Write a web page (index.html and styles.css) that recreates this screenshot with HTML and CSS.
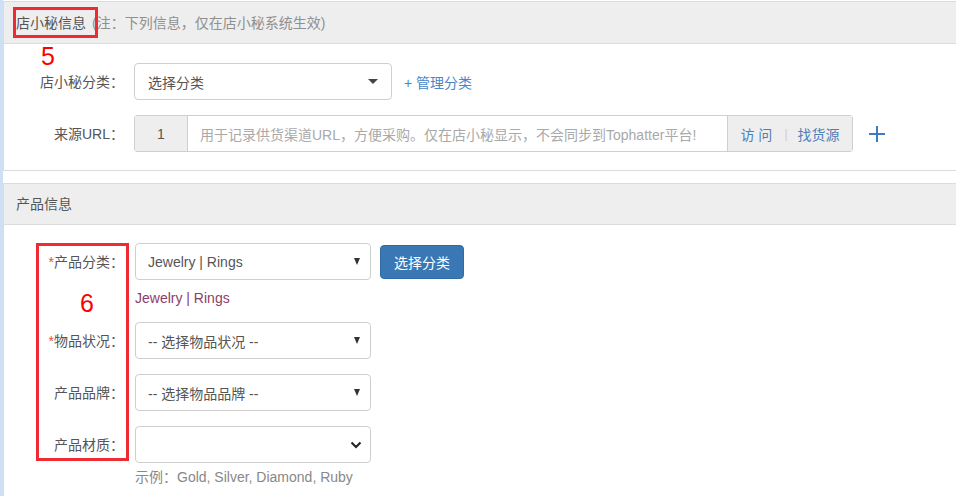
FILE: index.html
```html
<!DOCTYPE html>
<html lang="zh-CN">
<head>
<meta charset="utf-8">
<title>店小秘信息</title>
<link rel="stylesheet" href="styles.css">
</head>
<body>
<div class="page">
  <section class="panel panel-first">
    <div class="panel-head">
      <span class="head-title">店小秘信息</span><span class="head-note">(注：下列信息，仅在店小秘系统生效)</span>
    </div>
    <div class="panel-body body-first">
      <div class="row">
        <label class="lbl">店小秘分类：</label>
        <div class="sel sel-wide"><span>选择分类</span><span class="caret-big"></span></div>
        <a class="link-add">+ 管理分类</a>
      </div>
      <div class="row">
        <label class="lbl">来源URL：</label>
        <div class="igroup">
          <span class="addon addon-num">1</span>
          <span class="ifield">用于记录供货渠道URL，方便采购。仅在店小秘显示，不会同步到Tophatter平台!</span>
          <span class="addon addon-links"><a class="alink">访 问</a><span class="sep">|</span><a class="alink">找货源</a></span>
        </div>
        <svg class="plus" width="18" height="18" viewBox="0 0 18 18"><path d="M9 1V17M1 9H17" stroke="#3b7bc0" stroke-width="2" fill="none"/></svg>
      </div>
    </div>
    <div class="mark mark-5"></div>
    <span class="num num-5">5</span>
  </section>

  <section class="panel panel-second">
    <div class="panel-head head-second">
      <span class="head-title">产品信息</span>
    </div>
    <div class="panel-body body-second">
      <div class="row">
        <label class="lbl"><i class="req">*</i>产品分类：</label>
        <div class="sel sel-std"><span>Jewelry | Rings</span><span class="caret-small"></span></div>
        <button class="btn">选择分类</button>
      </div>
      <div class="cat-path">Jewelry | Rings</div>
      <div class="row row-gap">
        <label class="lbl"><i class="req">*</i>物品状况：</label>
        <div class="sel sel-std"><span>-- 选择物品状况 --</span><span class="caret-small"></span></div>
      </div>
      <div class="row row-gap2">
        <label class="lbl">产品品牌：</label>
        <div class="sel sel-std"><span>-- 选择物品品牌 --</span><span class="caret-small"></span></div>
      </div>
      <div class="row row-gap2">
        <label class="lbl">产品材质：</label>
        <div class="sel sel-std"><span></span>
          <svg class="chev" width="12" height="8" viewBox="0 0 12 8"><path d="M1.5 1.5L6 6L10.5 1.5" stroke="#222" stroke-width="2" fill="none"/></svg>
        </div>
      </div>
      <div class="hint">示例：Gold, Silver, Diamond, Ruby</div>
    </div>
    <div class="mark mark-6"></div>
    <span class="num num-6">6</span>
  </section>
</div>
</body>
</html>
```

FILE: styles.css
```css
* { box-sizing: border-box; }
html, body { margin: 0; padding: 0; }
body {
  background: #fff;
  font-family: "Liberation Sans", "Noto Sans CJK SC", sans-serif;
  font-size: 14px;
  color: #555;
  overflow: hidden;
}
.page {
  border-left: 3px solid #cfe0f4;
  min-height: 496px;
  padding-top: 1px;
}
.panel {
  position: relative;
  border: 1px solid #dcdcdc;
  border-right: none;
  background: #fff;
}
.panel-second { margin-top: 12px; }
.panel-head {
  height: 42px;
  background: #eeeeee;
  border-bottom: 1px solid #dcdcdc;
  display: flex;
  align-items: center;
  padding-left: 12px;
  line-height: 20px;
}
.head-second { height: 41px; }
.head-title { color: #555; }
.head-note { color: #909090; margin-left: 6px; }
.panel-body { padding: 19px 0 18px 0; }
.body-second { padding: 18px 0 30px 0; }
.row {
  display: flex;
  align-items: center;
}
.body-first .row + .row { margin-top: 15px; }
.lbl {
  width: 120px;
  margin-right: 10px;
  text-align: right;
  color: #555;
  line-height: 20px;
  white-space: nowrap;
}
.req { font-style: normal; color: #d9534f; }
.sel {
  height: 37px;
  border: 1px solid #cfcfcf;
  border-radius: 4px;
  display: flex;
  align-items: center;
  justify-content: space-between;
  color: #555;
  background: #fff;
}
.sel-wide { width: 258px; padding: 0 12px 0 13px; }
.sel-std { width: 236px; padding: 0 8px 0 12px; margin-left: 1px; }
.caret-big {
  width: 0; height: 0;
  border-left: 5px solid transparent;
  border-right: 5px solid transparent;
  border-top: 5px solid #444;
  margin-right: 1px;
}
.caret-small {
  width: 0; height: 0;
  border-left: 3.5px solid transparent;
  border-right: 3.5px solid transparent;
  border-top: 7px solid #333;
  margin-right: 2px;
}
.chev { margin-right: 0; }
.link-add { color: #4a86c8; margin-left: 12px; }
.igroup {
  width: 719px;
  height: 37px;
  display: flex;
  border: 1px solid #cfcfcf;
  border-radius: 3px;
}
.addon {
  background: #eeeeee;
  display: flex;
  align-items: center;
  justify-content: center;
}
.addon-num { width: 53px; border-right: 1px solid #cfcfcf; color: #555; }
.ifield {
  flex: 1;
  display: flex;
  align-items: center;
  padding-left: 12px;
  color: #a9a9a9;
  white-space: nowrap;
  overflow: hidden;
}
.addon-links { width: 125px; border-left: 1px solid #cfcfcf; gap: 0; }
.alink { color: #4f7fb8; }
.sep { color: #dcc9c9; margin: 0 10px 0 12px; font-size: 12px; }
.plus { margin-left: 15px; }
.btn {
  margin-left: 9px;
  width: 84px;
  height: 34px;
  background: #3a78b5;
  border: 1px solid #2f6ca6;
  border-radius: 4px;
  color: #fff;
  font-family: inherit;
  font-size: 14px;
  padding: 0;
}
.cat-path {
  margin: 8px 0 0 131px;
  line-height: 20px;
  color: #8c3d68;
}
.row-gap { margin-top: 14px; }
.row-gap2 { margin-top: 15px; }
.hint {
  margin: 4px 0 0 131px;
  line-height: 20px;
  color: #888;
}
.sel span, .cat-path, .hint { white-space: nowrap; }
.mark {
  position: absolute;
  border: 3px solid #ee2b33;
}
.mark-5 { left: 9px; top: 5px; width: 85px; height: 31px; }
.mark-6 { left: 32px; top: 59px; width: 93px; height: 218px; }
.num {
  position: absolute;
  color: #f00;
  font-family: "Liberation Sans", sans-serif;
  font-size: 25px;
  line-height: 26px;
}
.num-5 { left: 37px; top: 41px; }
.num-6 { left: 76px; top: 106px; }
```
